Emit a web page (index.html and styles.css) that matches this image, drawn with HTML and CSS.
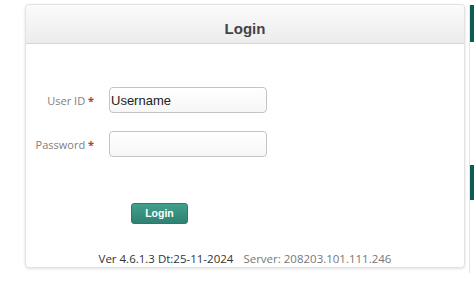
FILE: index.html
```html
<!DOCTYPE html>
<html lang="en">
<head>
    <meta charset="UTF-8">
    <meta name="viewport" content="width=device-width, initial-scale=1.0">
    <title>Login</title>
    <link rel="stylesheet" href="styles.css">
</head>
<body>
    <div class="page">
        <div class="login-box">
            <header class="login-header">
                <h1>Login</h1>
            </header>

            <form class="login-form" onsubmit="return false;">
                <div class="form-row">
                    <label for="user-id">User ID <span class="req">*</span></label>
                    <input type="text" id="user-id" value="Username">
                </div>
                <div class="form-row">
                    <label for="password">Password <span class="req">*</span></label>
                    <input type="password" id="password">
                </div>
                <div class="form-actions">
                    <button type="submit" class="login-btn">Login</button>
                </div>
            </form>

            <footer class="login-footer">
                <span class="version">Ver 4.6.1.3 Dt:25-11-2024</span>
                <span class="server">Server: 208203.101.111.246</span>
            </footer>
        </div>

        <aside class="side-rail">
            <div class="rail-tab"></div>
            <div class="rail-tab second"></div>
        </aside>
    </div>
</body>
</html>
```

FILE: styles.css
```css
body {
    margin: 0;
    font-family: 'Open Sans', 'DejaVu Sans', sans-serif;
    background: #fff;
    color: #333;
}
.page {
    display: flex;
    padding: 4px 0 0 25px;
    gap: 4px;
}
.login-box {
    width: 439px;
    height: 262px;
    border: 1px solid #e2e2e2;
    border-radius: 4px;
    box-shadow: 0 1px 3px rgba(0, 0, 0, 0.12);
    display: flex;
    flex-direction: column;
    background: #fff;
}
.login-header {
    height: 39px;
    box-sizing: border-box;
    padding-top: 8px;
    background: linear-gradient(#fbfbfb, #ececec);
    border-bottom: 1px solid #d6d6d6;
    border-radius: 4px 4px 0 0;
    display: flex;
    align-items: center;
    justify-content: center;
}
.login-header h1 {
    margin: 0;
    font-family: 'Liberation Sans', Arial, sans-serif;
    font-size: 15px;
    font-weight: bold;
    color: #444;
}
.login-form {
    padding-top: 43px;
}
.form-row {
    display: flex;
    align-items: center;
    gap: 15px;
    margin-bottom: 18px;
}
.form-row label {
    width: 68px;
    text-align: right;
    font-size: 11px;
    color: #808080;
}
.req {
    color: #c0392b;
    font-weight: bold;
}
.form-row input {
    width: 158px;
    height: 26px;
    box-sizing: border-box;
    border: 1px solid #c4c4c4;
    border-radius: 4px;
    background: linear-gradient(#fff, #f6f6f6);
    padding: 0 1px;
    font-family: 'Liberation Sans', Arial, sans-serif;
    font-size: 13px;
    color: #222;
}
.form-actions {
    padding: 25px 0 0 105px;
}
.login-btn {
    width: 57px;
    height: 21px;
    background: linear-gradient(#42a08c, #2f8171);
    color: #fff;
    border: 1px solid #2b7a6a;
    border-radius: 3px;
    font-family: 'Liberation Sans', Arial, sans-serif;
    font-size: 10.5px;
    font-weight: bold;
    padding: 0;
}
.login-footer {
    margin-top: auto;
    padding-bottom: 1px;
    display: flex;
    justify-content: center;
    gap: 10px;
    font-size: 11.5px;
}
.version {
    color: #333;
}
.server {
    color: #777;
}
.side-rail {
    width: 4px;
    height: 268px;
    margin-top: 1px;
    border-left: 1px solid #e4e4e4;
}
.rail-tab {
    height: 37px;
    background: #0f5d52;
}
.rail-tab.second {
    height: 35px;
    margin-top: 123px;
}
```
